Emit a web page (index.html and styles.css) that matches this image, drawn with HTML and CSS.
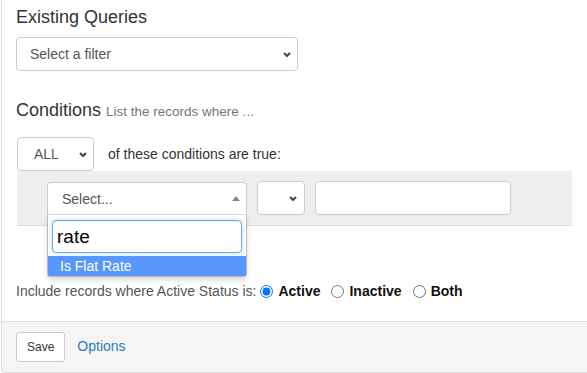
FILE: index.html
```html
<!DOCTYPE html>
<html lang="en">
<head>
    <meta charset="UTF-8">
    <meta name="viewport" content="width=device-width, initial-scale=1.0">
    <title>Query Builder</title>
    <link rel="stylesheet" href="styles.css">
</head>
<body>

    <div class="panel">
        <div class="panel-body">
            <h4>Existing Queries</h4>
            <div class="select-box filter-select">
                <span>Select a filter</span>
                <svg class="chevron" width="8" height="5" viewBox="0 0 8 5"><polyline points="1,1 4,4 7,1"/></svg>
            </div>

            <h4 class="conditions-title">Conditions <small>List the records where ...</small></h4>

            <div class="conditions">
                <div class="match-row">
                    <div class="select-box match-select">
                        <span>ALL</span>
                        <svg class="chevron" width="8" height="5" viewBox="0 0 8 5"><polyline points="1,1 4,4 7,1"/></svg>
                    </div>
                    <span class="match-text">of these conditions are true:</span>
                </div>

                <div class="condition-row">
                    <div class="select2">
                        <div class="select2-choice">
                            <span>Select...</span>
                            <b class="arrow-up"></b>
                        </div>
                        <!-- open dropdown -->
                        <div class="select2-drop">
                            <div class="select2-search">
                                <input type="text" value="rate">
                            </div>
                            <ul class="select2-results">
                                <li class="highlighted">Is Flat Rate</li>
                            </ul>
                        </div>
                    </div>
                    <div class="select-box op-select">
                        <span></span>
                        <svg class="chevron" width="8" height="5" viewBox="0 0 8 5"><polyline points="1,1 4,4 7,1"/></svg>
                    </div>
                    <input class="value-input" type="text">
                </div>
            </div>

            <div class="status-row">
                <span>Include records where Active Status is:</span>
                <label class="radio first"><input type="radio" name="status" checked> Active</label>
                <label class="radio"><input type="radio" name="status"> Inactive</label>
                <label class="radio"><input type="radio" name="status"> Both</label>
            </div>
        </div>

        <div class="panel-footer">
            <button class="btn">Save</button>
            <a href="#" class="options-link">Options</a>
        </div>
    </div>

</body>
</html>
```

FILE: styles.css
```css
html, body {
    margin: 0;
    overflow: hidden;
}

body {
    font-family: "Liberation Sans", Arial, sans-serif;
    font-size: 14px;
    line-height: 20px;
    color: #333;
    background-color: #fff;
}

.panel {
    margin-left: 1px;
    border: 1px solid #ddd;
    border-top: none;
    border-right: none;
    border-radius: 0 0 0 4px;
}

.panel-body {
    padding: 7px 15px 20px 14px;
}

h4 {
    font-size: 18px;
    line-height: 20px;
    font-weight: normal;
    margin: 0 0 10px;
}

.conditions-title {
    margin-top: 29px;
    margin-bottom: 17px;
}

.conditions-title small {
    font-size: 13.5px;
    line-height: 1;
    color: #777;
}

.select-box {
    display: flex;
    align-items: center;
    justify-content: space-between;
    box-sizing: border-box;
    height: 34px;
    padding: 0 6px 0 13px;
    border: 1px solid #ccc;
    border-radius: 4px;
    background-color: #fff;
    color: #555;
}

.chevron {
    fill: none;
    stroke: #444;
    stroke-width: 2;
}

.filter-select {
    width: 282px;
}

.conditions {
    margin-left: 1px;
}

.match-row {
    display: flex;
    align-items: center;
}

.match-select {
    width: 77px;
    padding: 0 6px 0 16px;
}

.match-text {
    margin-left: 14px;
}

.condition-row {
    display: flex;
    align-items: flex-start;
    gap: 10px;
    padding: 10px 30px;
    background-color: #eee;
    border-bottom: 1px solid #ddd;
}

.select2 {
    position: relative;
    width: 200px;
    height: 33px;
    margin-top: 1px;
}

.select2-choice {
    display: flex;
    align-items: center;
    justify-content: space-between;
    box-sizing: border-box;
    height: 33px;
    padding: 0 6px 0 14px;
    border: 1px solid #ccc;
    border-bottom-color: #ddd;
    border-radius: 4px 4px 0 0;
    background-color: #fff;
    color: #555;
}

.arrow-up {
    width: 0;
    height: 0;
    border-style: solid;
    border-width: 0 4px 5px 4px;
    border-color: transparent transparent #888 transparent;
}

.select2-drop {
    position: absolute;
    top: 33px;
    left: 0;
    width: 200px;
    box-sizing: border-box;
    background-color: #fff;
    border: 1px solid #bbb;
    border-top: none;
    border-radius: 0 0 4px 4px;
    box-shadow: 0 3px 5px rgba(0, 0, 0, 0.15);
    z-index: 10;
}

.select2-search {
    padding: 5px 4px 3px;
}

.select2-search input {
    display: block;
    width: 100%;
    box-sizing: border-box;
    height: 33px;
    padding: 0 4px;
    border: 1px solid #66afe9;
    border-radius: 4px;
    box-shadow: inset 0 1px 1px rgba(0, 0, 0, 0.075), 0 0 4px rgba(102, 175, 233, 0.5);
    outline: none;
    font-family: "Liberation Sans", Arial, sans-serif;
    font-size: 19px;
    color: #000;
}

.select2-results {
    list-style: none;
    margin: 0;
    padding: 0;
}

.select2-results li {
    height: 20px;
    line-height: 20px;
    padding-left: 12px;
}

.select2-results .highlighted {
    background-color: #5897fb;
    color: #fff;
}

.op-select {
    width: 48px;
    padding: 0 7px 0 10px;
}

.value-input {
    width: 196px;
    height: 34px;
    box-sizing: border-box;
    margin: 0;
    border: 1px solid #ccc;
    border-radius: 4px;
    background-color: #fff;
}

.status-row {
    display: flex;
    align-items: center;
    margin-top: 55px;
    color: #555;
}

.radio {
    display: inline-flex;
    align-items: center;
    margin-left: 11px;
    font-weight: bold;
    color: #111;
}

.radio.first {
    margin-left: 4px;
}

.radio input {
    margin: 0 5px 0 0;
    width: 13px;
    height: 13px;
}

.panel-footer {
    display: flex;
    align-items: baseline;
    padding: 10px 15px 10px 14px;
    background-color: #f5f5f5;
    border-top: 1px solid #ddd;
    border-radius: 0 0 0 3px;
}

.btn {
    font-family: "Liberation Sans", Arial, sans-serif;
    font-size: 12px;
    line-height: 18px;
    padding: 5px 10px;
    border: 1px solid #ccc;
    border-radius: 3px;
    background-color: #fff;
    color: #333;
    cursor: pointer;
}

.options-link {
    margin-left: 12px;
    color: #337ab7;
    text-decoration: none;
}
```
